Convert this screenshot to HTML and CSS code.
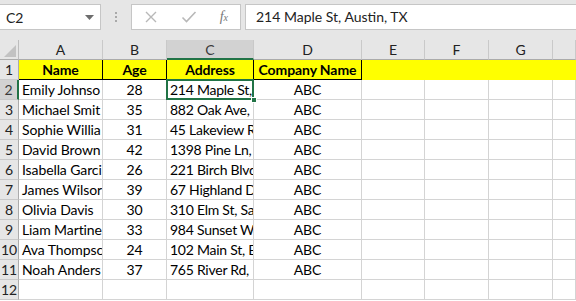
FILE: index.html
```html
<!DOCTYPE html>
<html lang="en">

<head>
    <meta charset="UTF-8">
    <title>Sheet1</title>
    <link rel="stylesheet" href="styles.css">
</head>

<body>

    <div class="toolbar">
        <div class="namebox">
            <span>C2</span>
            <svg width="9" height="5" viewBox="0 0 9 5"><path d="M0 0h9L4.5 5z" fill="#6d6d6d"/></svg>
        </div>
        <div class="grip">
            <i></i><i></i><i></i>
        </div>
        <div class="fbuttons">
            <svg width="14" height="14" viewBox="0 0 14 14"><path d="M2 2l10 10M12 2L2 12" stroke="#b8b8b8" stroke-width="1.4"/></svg>
            <svg width="16" height="14" viewBox="0 0 16 14"><path d="M1.5 7.5l4 4L14.5 2" stroke="#b8b8b8" stroke-width="1.6" fill="none"/></svg>
            <span class="fx">f<sub>x</sub></span>
        </div>
        <div class="formula">214 Maple St, Austin, TX</div>
    </div>

    <div class="sheet">
        <div class="corner"><svg width="12" height="12" viewBox="0 0 12 12"><path d="M12 0v12H0z" fill="#c2c2c2"/></svg></div>
        <div class="colhead">A</div>
        <div class="colhead">B</div>
        <div class="colhead active">C</div>
        <div class="colhead">D</div>
        <div class="colhead">E</div>
        <div class="colhead">F</div>
        <div class="colhead">G</div>
        <div class="colhead"></div>

        <div class="rowhead">1</div>
        <div class="cell head">Name</div>
        <div class="cell head">Age</div>
        <div class="cell head">Address</div>
        <div class="cell head">Company Name</div>
        <div class="cell fill"></div>
        <div class="cell fill"></div>
        <div class="cell fill"></div>
        <div class="cell fill"></div>

        <div class="rowhead active">2</div>
        <div class="cell">Emily Johnso</div>
        <div class="cell mid">28</div>
        <div class="cell addr selected">214 Maple St,<span class="handle"></span></div>
        <div class="cell mid">ABC</div>
        <div class="cell"></div>
        <div class="cell"></div>
        <div class="cell"></div>
        <div class="cell"></div>

        <div class="rowhead">3</div>
        <div class="cell">Michael Smit</div>
        <div class="cell mid">35</div>
        <div class="cell addr">882 Oak Ave,</div>
        <div class="cell mid">ABC</div>
        <div class="cell"></div>
        <div class="cell"></div>
        <div class="cell"></div>
        <div class="cell"></div>

        <div class="rowhead">4</div>
        <div class="cell">Sophie Willia</div>
        <div class="cell mid">31</div>
        <div class="cell addr">45 Lakeview R</div>
        <div class="cell mid">ABC</div>
        <div class="cell"></div>
        <div class="cell"></div>
        <div class="cell"></div>
        <div class="cell"></div>

        <div class="rowhead">5</div>
        <div class="cell">David Brown</div>
        <div class="cell mid">42</div>
        <div class="cell addr">1398 Pine Ln,</div>
        <div class="cell mid">ABC</div>
        <div class="cell"></div>
        <div class="cell"></div>
        <div class="cell"></div>
        <div class="cell"></div>

        <div class="rowhead">6</div>
        <div class="cell">Isabella Garci</div>
        <div class="cell mid">26</div>
        <div class="cell addr">221 Birch Blvd</div>
        <div class="cell mid">ABC</div>
        <div class="cell"></div>
        <div class="cell"></div>
        <div class="cell"></div>
        <div class="cell"></div>

        <div class="rowhead">7</div>
        <div class="cell">James Wilsor</div>
        <div class="cell mid">39</div>
        <div class="cell addr">67 Highland D</div>
        <div class="cell mid">ABC</div>
        <div class="cell"></div>
        <div class="cell"></div>
        <div class="cell"></div>
        <div class="cell"></div>

        <div class="rowhead">8</div>
        <div class="cell">Olivia Davis</div>
        <div class="cell mid">30</div>
        <div class="cell addr">310 Elm St, Sa</div>
        <div class="cell mid">ABC</div>
        <div class="cell"></div>
        <div class="cell"></div>
        <div class="cell"></div>
        <div class="cell"></div>

        <div class="rowhead">9</div>
        <div class="cell">Liam Martine</div>
        <div class="cell mid">33</div>
        <div class="cell addr">984 Sunset W</div>
        <div class="cell mid">ABC</div>
        <div class="cell"></div>
        <div class="cell"></div>
        <div class="cell"></div>
        <div class="cell"></div>

        <div class="rowhead">10</div>
        <div class="cell">Ava Thompsc</div>
        <div class="cell mid">24</div>
        <div class="cell addr">102 Main St, B</div>
        <div class="cell mid">ABC</div>
        <div class="cell"></div>
        <div class="cell"></div>
        <div class="cell"></div>
        <div class="cell"></div>

        <div class="rowhead">11</div>
        <div class="cell">Noah Anders</div>
        <div class="cell mid">37</div>
        <div class="cell addr">765 River Rd,</div>
        <div class="cell mid">ABC</div>
        <div class="cell"></div>
        <div class="cell"></div>
        <div class="cell"></div>
        <div class="cell"></div>

        <div class="rowhead">12</div>
        <div class="cell"></div>
        <div class="cell"></div>
        <div class="cell"></div>
        <div class="cell"></div>
        <div class="cell"></div>
        <div class="cell"></div>
        <div class="cell"></div>
        <div class="cell"></div>
    </div>

</body>

</html>
```

FILE: styles.css
```css
* {
    margin: 0;
    padding: 0;
    box-sizing: border-box;
}

body {
    width: 576px;
    height: 301px;
    overflow: hidden;
    background: #fff;
    font-family: Lato, "Open Sans", sans-serif;
    color: #000;
}

/* formula bar */
.toolbar {
    height: 40px;
    background: #e6e6e6;
    display: flex;
    align-items: flex-start;
    padding-top: 4px;
}

.namebox {
    width: 101px;
    height: 26px;
    background: #fff;
    border: 1px solid #c6c6c6;
    border-left: none;
    display: flex;
    align-items: center;
    justify-content: space-between;
    padding: 0 6px 0 6px;
    font-size: 14px;
    color: #222;
}

.grip {
    width: 30px;
    height: 26px;
    display: flex;
    flex-direction: column;
    align-items: center;
    justify-content: center;
    gap: 2px;
}

.grip i {
    display: block;
    width: 2px;
    height: 2px;
    background: #a9a9a9;
}

.fbuttons {
    width: 110px;
    height: 26px;
    background: #fff;
    border: 1px solid #c6c6c6;
    display: flex;
    align-items: center;
    justify-content: space-between;
    padding: 0 12px 0 12px;
}

.fx {
    font-family: "Liberation Serif", serif;
    font-style: italic;
    font-size: 14px;
    color: #777;
}

.fx sub {
    font-size: 10px;
    vertical-align: 0;
}

.formula {
    flex: 1;
    height: 26px;
    margin-left: 4px;
    background: #fff;
    border: 1px solid #c6c6c6;
    border-right: none;
    padding-left: 10px;
    font-size: 14px;
    line-height: 24px;
    color: #222;
}

/* grid */
.sheet {
    display: grid;
    grid-template-columns: 19px 84px 64px 87px 108px 63px 64px 64px 23px;
    grid-auto-rows: 20px;
    font-size: 14px;
}

.corner {
    background: #e6e6e6;
    border-right: 1px solid #bdbdbd;
    border-bottom: 1px solid #ababab;
    display: flex;
    align-items: flex-end;
    justify-content: flex-end;
    padding: 0 2px 2px 0;
}

.colhead {
    background: #e6e6e6;
    border-right: 1px solid #c9c9c9;
    border-bottom: 1px solid #ababab;
    text-align: center;
    line-height: 19px;
    color: #222;
}

.rowhead {
    background: #e6e6e6;
    border-right: 1px solid #ababab;
    border-bottom: 1px solid #c9c9c9;
    text-align: center;
    line-height: 19px;
    color: #222;
}

.colhead.active {
    background: #d2d2d2;
    border-bottom: 2px solid #217346;
    color: #3a3a3a;
}

.rowhead.active {
    background: #d2d2d2;
    border-right: 2px solid #217346;
    color: #3a3a3a;
}

.cell {
    border-right: 1px solid #d4d4d4;
    border-bottom: 1px solid #d4d4d4;
    padding: 0 3px;
    line-height: 19px;
    white-space: nowrap;
    overflow: hidden;
    letter-spacing: -0.1px;
}

.addr {
    letter-spacing: -0.25px;
}

.mid {
    text-align: center;
}

.head {
    background: #ffff00;
    border-right: 1px solid #000;
    border-bottom: 1px solid #000;
    font-weight: bold;
    text-align: center;
}

.fill {
    background: #ffff00;
    border-right-color: #ffff00;
    border-bottom-color: #ffff00;
}

.selected {
    position: relative;
    overflow: visible;
}

.selected::after {
    content: "";
    position: absolute;
    top: -1px;
    left: -1px;
    right: -1px;
    bottom: -1px;
    border: 2px solid #217346;
}

.handle {
    position: absolute;
    right: -4px;
    bottom: -4px;
    width: 6px;
    height: 6px;
    background: #217346;
    border: 1px solid #fff;
    z-index: 2;
}
```
